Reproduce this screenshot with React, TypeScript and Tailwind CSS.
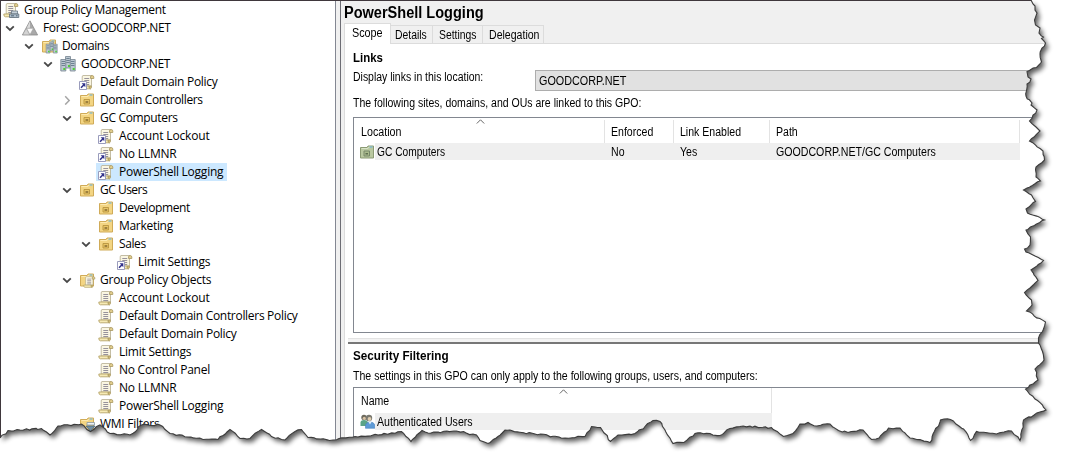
import type { ReactNode } from 'react';

type Kind = 'root' | 'forest' | 'domains' | 'domain' | 'link' | 'ou' | 'gpos' | 'gpo' | 'wmi';

interface TreeItem {
  label: string;
  depth: number;
  kind: Kind;
  state?: 'open' | 'closed';
  selected?: boolean;
  spacing: string;
}

const TREE: TreeItem[] = [
  { label: 'Group Policy Management', depth: 0, kind: 'root', spacing: 'tracking-[-0.28px]' },
  { label: 'Forest: GOODCORP.NET', depth: 1, kind: 'forest', state: 'open', spacing: 'tracking-[-0.34px]' },
  { label: 'Domains', depth: 2, kind: 'domains', state: 'open', spacing: 'tracking-[-0.38px]' },
  { label: 'GOODCORP.NET', depth: 3, kind: 'domain', state: 'open', spacing: 'tracking-[-0.33px]' },
  { label: 'Default Domain Policy', depth: 4, kind: 'link', spacing: 'tracking-[-0.28px]' },
  { label: 'Domain Controllers', depth: 4, kind: 'ou', state: 'closed', spacing: 'tracking-[-0.36px]' },
  { label: 'GC Computers', depth: 4, kind: 'ou', state: 'open', spacing: 'tracking-[-0.33px]' },
  { label: 'Account Lockout', depth: 5, kind: 'link', spacing: 'tracking-[-0.14px]' },
  { label: 'No LLMNR', depth: 5, kind: 'link', spacing: 'tracking-[-0.2px]' },
  { label: 'PowerShell Logging', depth: 5, kind: 'link', selected: true, spacing: 'tracking-[-0.24px]' },
  { label: 'GC Users', depth: 4, kind: 'ou', state: 'open', spacing: 'tracking-[-0.5px]' },
  { label: 'Development', depth: 5, kind: 'ou', spacing: 'tracking-[-0.4px]' },
  { label: 'Marketing', depth: 5, kind: 'ou', spacing: 'tracking-[-0.3px]' },
  { label: 'Sales', depth: 5, kind: 'ou', state: 'open', spacing: 'tracking-[-0.4px]' },
  { label: 'Limit Settings', depth: 6, kind: 'link', spacing: 'tracking-[-0.22px]' },
  { label: 'Group Policy Objects', depth: 4, kind: 'gpos', state: 'open', spacing: 'tracking-[-0.25px]' },
  { label: 'Account Lockout', depth: 5, kind: 'gpo', spacing: 'tracking-[-0.14px]' },
  { label: 'Default Domain Controllers Policy', depth: 5, kind: 'gpo', spacing: 'tracking-[-0.3px]' },
  { label: 'Default Domain Policy', depth: 5, kind: 'gpo', spacing: 'tracking-[-0.28px]' },
  { label: 'Limit Settings', depth: 5, kind: 'gpo', spacing: 'tracking-[-0.22px]' },
  { label: 'No Control Panel', depth: 5, kind: 'gpo', spacing: 'tracking-[-0.26px]' },
  { label: 'No LLMNR', depth: 5, kind: 'gpo', spacing: 'tracking-[-0.2px]' },
  { label: 'PowerShell Logging', depth: 5, kind: 'gpo', spacing: 'tracking-[-0.24px]' },
  { label: 'WMI Filters', depth: 4, kind: 'wmi', spacing: 'tracking-[-0.25px]' },
];

function Scroll() {
  return (
    <g>
      <path d="M4 1.500h8.500V12H3.200V3Q3.200 1.500 4 1.500z" fill="#faf6e2" stroke="#b5ad90" strokeWidth=".8" />
      <path d="M11.500 4.500V3q0-1.500 1.600-1.500T14.800 3v1.500z" fill="#e3cf8e" stroke="#a8975f" strokeWidth=".8" />
      <path d="M.8 12h9.400q-.4 2.800 1.300 2.800H2.300Q.8 14.800.8 12z" fill="#f6eab4" stroke="#b5a469" strokeWidth=".9" />
      <path d="M10.200 12q-.3 2.800 1.100 2.800t1.200-2.800z" fill="#d3bc74" stroke="#a8975f" strokeWidth=".7" />
      <path d="M5.300 4.500h4.900M5.300 6.500h4.900M5.300 8.500h4.900M5.300 10.500h4.900" stroke="#8b8794" strokeWidth=".9" />
    </g>
  );
}

function FolderShape({ green = false }: { green?: boolean }) {
  return (
    <g>
      <path d="M1.500 3.500H8l1-1.500h5.500v12h-13z" fill={green ? '#b9c8a0' : '#f3d583'} stroke={green ? '#8b9a74' : '#d0ab58'} />
      <path d="M2.500 4.500H9l1-1.500h3.500" fill="none" stroke={green ? '#d8e3c6' : '#fdeab0'} />
      <path d="M10.500 3h3" stroke="#5aa7d0" />
    </g>
  );
}

function Towers({ small = false }: { small?: boolean }) {
  return (
    <g transform={small ? 'translate(4.500 3.500) scale(.77)' : undefined}>
      {[[5.500, 0.500, 11.500], [0.800, 3.500, 11.500], [10.200, 3.500, 11.500]].map(([x, y, h], i) => (
        <g key={i}>
          <path d={`M${x} ${y}h5v${h}h-5z`} fill="#bcc8d2" stroke="#75838f" strokeWidth=".8" />
          <path d={`M${x + 0.800} ${y + 2}h3.400M${x + 0.800} ${y + 4}h3.400M${x + 0.800} ${y + 6}h3.400`} stroke="#66798a" strokeWidth=".9" />
          <path d={`M${x + 2.500} ${y + 8.500}h2v2h-2z`} fill="#4cd332" />
        </g>
      ))}
    </g>
  );
}

function NodeIcon({ kind }: { kind: Kind }) {
  return (
    <svg className="h-4 w-4 shrink-0 overflow-visible" viewBox="0 0 16 16">
      {kind === 'root' && (
        <>
          <Scroll />
          <path d="M8.500 9h6v3h-6z" fill="#c6d0d8" stroke="#6b7a87" strokeWidth=".8" />
          <path d="M6.500 12h9.300v3.500H6.500z" fill="#aebdc9" stroke="#5d6c79" strokeWidth=".8" />
          <path d="M8 13.800h3M13 13.800h1.500" stroke="#526677" />
        </>
      )}
      {kind === 'forest' && (
        <>
          <path d="M8 .8 15.600 15H.4z" fill="#a9a9a9" stroke="#8c8c8c" strokeWidth=".8" />
          <path d="M8 1.200v6.600l-3.400.4z" fill="#dadada" />
          <path d="M4.500 8.300h7L8 14.700z" fill="#fafafa" stroke="#9a9a9a" strokeWidth=".6" />
          <path d="m4.200 9-3 5.500h6z" fill="#d3d3d3" />
        </>
      )}
      {kind === 'domains' && (
        <>
          <FolderShape />
          <Towers small />
        </>
      )}
      {kind === 'domain' && <Towers />}
      {(kind === 'gpo' || kind === 'link') && <Scroll />}
      {kind === 'link' && (
        <>
          <path d="M.5 7.500h7v8h-7z" fill="#fff" stroke="#9a9cbc" />
          <path d="m2 13.800 3-3" stroke="#31318a" strokeWidth="1.600" />
          <path d="M2.600 9.300h3.700v3.900z" fill="#31318a" />
        </>
      )}
      {kind === 'ou' && (
        <>
          <FolderShape />
          <path d="M5 7.500h5.500V12H5z" fill="#e9c667" stroke="#b8943f" strokeWidth=".9" />
          <path d="M6.500 9.200h2.800v1.600H6.500z" fill="#8a6f35" />
        </>
      )}
      {kind === 'gpos' && (
        <>
          <FolderShape />
          <g transform="translate(4 3.500) scale(.8)">
            <Scroll />
          </g>
        </>
      )}
      {kind === 'wmi' && (
        <>
          <FolderShape />
          <path d="M8 6.500h7.500V9H8z" fill="#edf1f4" stroke="#8797a2" strokeWidth=".8" />
          <path d="M7 10h9l-3.500 4v3h-2v-3z" fill="#718fa4" stroke="#476275" strokeWidth=".7" />
        </>
      )}
    </svg>
  );
}

const INDENT = ['w-0', 'w-0', 'w-[19px]', 'w-[38px]', 'w-[57px]', 'w-[76px]', 'w-[95px]'];

function TreeRow({ item }: { item: TreeItem }) {
  return (
    <div className="flex h-[18px] shrink-0 items-center">
      <div className={`shrink-0 ${INDENT[item.depth]}`} />
      <div className={`flex shrink-0 justify-center ${item.depth === 0 ? 'w-0' : 'w-[19px]'}`}>
        {item.state && (
          <svg className="mr-px h-[10px] w-[10px]" viewBox="0 0 10 10" fill="none">
            {item.state === 'open' ? (
              <path d="m1.200 3.300 3.800 3.700 3.800-3.700" stroke="#484848" strokeWidth="1.800" />
            ) : (
              <path d="m3.200 1.200 4 4.200-4 4.200" stroke="#a6a6a6" strokeWidth="1.500" />
            )}
          </svg>
        )}
      </div>
      <div className={`flex h-[18px] items-center gap-[5px] pr-[4px] pl-[2px] ${item.selected ? 'bg-[#cce8ff]' : ''}`}>
        <NodeIcon kind={item.kind} />
        <span className={`text-[12px] leading-[18px] whitespace-nowrap ${item.spacing}`}>{item.label}</span>
      </div>
    </div>
  );
}

function SortMark() {
  return (
    <svg className="h-[5px] w-[9px]" viewBox="0 0 9 5">
      <path d="m.8 4.500 3.700-3.700 3.700 3.700" fill="none" stroke="#666" />
    </svg>
  );
}

/** Text set in condensed proportions, as the dialog font draws it. */
function Condensed({ fit = 'scale-x-[.88]', children }: { fit?: string; children: ReactNode }) {
  return <span className={`inline-block origin-left whitespace-nowrap ${fit}`}>{children}</span>;
}

function Cell({ className, children }: { className: string; children: ReactNode }) {
  return <div className={`flex shrink-0 items-center whitespace-nowrap ${className}`}>{children}</div>;
}

const TEAR: [number, number][] = [
  [1031, 0], [1033, 4], [1035, 6], [1035, 10], [1037, 13], [1034.500, 20], [1035.500, 25], [1040, 28], [1039, 33], [1043.500, 37], [1041.500, 38.500],
  [1045.500, 43], [1042, 48], [1040, 54], [1041.500, 62], [1036.500, 67.500], [1027, 71.500], [1028, 77], [1031, 79], [1027, 84], [1026, 96],
  [1032, 103], [1031, 105], [1037, 110], [1033, 115], [1029.500, 121], [1036, 127], [1040, 131], [1034, 137], [1029.500, 141], [1043, 151],
  [1044.500, 160], [1036, 167], [1036, 177], [1040.500, 181], [1023.500, 190], [1031.500, 195], [1035.500, 201.500], [1026, 209], [1027.500, 213],
  [1044.500, 220], [1026, 230], [1030.500, 237], [1030, 245], [1024.500, 249], [1026, 252], [1035, 256], [1043.500, 260.500], [1031, 270],
  [1038, 280.500], [1030, 288], [1024.500, 292.500], [1031.500, 300], [1032, 305], [1026.500, 311], [1045.500, 322], [1042.500, 331.500],
  [1038.500, 338], [1038.500, 343], [1042.500, 351.500], [1044, 360], [1035, 369], [1038, 380], [1025.500, 389], [1035, 399], [1046, 410],
  [1023.500, 420], [1020, 440.500], [1018, 437], [1011.500, 431], [1004, 432], [996.500, 434], [976.500, 431.500], [970.500, 440.500], [963.500, 429],
  [956, 424], [950.500, 419.500], [940.500, 420], [930, 442.500], [910, 438], [900, 428], [888.500, 428], [879, 438], [871.500, 439.500], [863, 430],
  [848, 432.500], [838.500, 430.500], [830, 424], [817, 426], [808, 422.500], [800, 424], [793, 433.500], [783.500, 436.500], [771.500, 427.500],
  [740, 426.500], [730, 428.500], [720, 435.500], [710, 433.500], [695, 433.500], [684, 442.500], [673, 443.500], [665, 430], [660, 421.500],
  [653, 420.500], [645, 426.500], [635, 433.500], [618, 435], [610.500, 441.500], [600.500, 427.500], [591.500, 426.500], [585, 436.500], [565, 438],
  [535, 434], [505, 430], [498, 436.500], [488, 443.500], [480, 440.500], [476.500, 435], [456.500, 431], [428, 433], [422, 430.500], [411, 441.500],
  [401.500, 431.500], [378, 435], [355, 436.500], [333, 440], [308, 437.500], [301.500, 429.500], [295, 431.500], [285, 440], [271.500, 436.500],
  [261.500, 429.500], [250, 438.500], [240, 438.500], [230, 429.500], [218, 439.500], [203, 439.500], [170, 433.500], [160, 425], [141.500, 425],
  [130, 435], [110, 433.500], [100, 425], [90.500, 431.500], [81.500, 424], [58, 426], [50, 435], [41.500, 428.500], [20, 430], [8, 430.500], [0, 438],
];

function roughen(points: [number, number][]): string {
  let seed = 7;
  const noise = () => {
    seed = (seed * 1103515245 + 12345) % 2147483648;
    return seed / 2147483648 - 0.5;
  };
  const out: string[] = [];
  points.forEach(([x, y], i) => {
    out.push(`${x} ${y}`);
    const next = points[i + 1];
    if (!next) return;
    const steps = Math.floor(Math.hypot(next[0] - x, next[1] - y) / 3);
    for (let s = 1; s < steps; s++) {
      const px = x + ((next[0] - x) * s) / steps + noise() * 1.800;
      const py = y + ((next[1] - y) * s) / steps + noise() * 1.800;
      out.push(`${px.toFixed(1)} ${py.toFixed(1)}`);
    }
  });
  return out.join('L');
}

const EDGE = roughen(TEAR);

function TornEdge() {
  const outside = `M${EDGE}V466H1070V0z`;
  return (
    <svg className="pointer-events-none absolute inset-0 h-[466px] w-[1070px]" viewBox="0 0 1070 466">
      <defs>
        <clipPath id="outside">
          <path d={outside} />
        </clipPath>
        <filter id="soft" x="-5%" y="-5%" width="110%" height="110%">
          <feGaussianBlur stdDeviation="2.4" />
        </filter>
      </defs>
      <path d={outside} fill="#fff" />
      <g clipPath="url(#outside)">
        <path d={`M${EDGE}V8H1025z`} transform="translate(3 3.500)" fill="#000" opacity=".64" filter="url(#soft)" />
      </g>
      <path d={`M${EDGE}`} fill="none" stroke="#3c3c3c" strokeWidth="1.100" />
    </svg>
  );
}

const TAB = 'flex h-[18px] items-center justify-center border-t border-r border-[#dcdcdc]';

export default function App() {
  return (
    <div className="relative h-[466px] w-[1070px] overflow-hidden bg-white text-black">
      <div className="flex h-[466px] border-t border-l border-[#3f373c]">
        <aside className="flex w-[334px] shrink-0 flex-col font-['Open_Sans','Noto_Sans',sans-serif]">
          {TREE.map((item, i) => (
            <TreeRow key={i} item={item} />
          ))}
        </aside>
        <div className="w-[6px] shrink-0 border-x border-l-[#838792] border-r-[#6d6d74] bg-[#f0f0f0]" />

        <main className="flex min-w-0 grow flex-col bg-[#f0f0f0] pl-[3px] font-['Liberation_Sans',Arial,sans-serif] text-[12px]">
          <h1 className="h-[22px] text-[16px] leading-[23px] font-bold">
            <Condensed fit="scale-x-[.908]">PowerShell Logging</Condensed>
          </h1>
          <div className="flex h-5 items-end">
            <div className="z-10 -mb-px flex h-[21px] w-[47px] shrink-0 items-center border border-b-0 border-[#dcdcdc] bg-white pb-[2px] pl-[7px]">
              <Condensed fit="scale-x-[.9]">Scope</Condensed>
            </div>
            <div className={TAB}>
              <div className="w-[41px] pl-[4px]">
                <Condensed fit="scale-x-[.865]">Details</Condensed>
              </div>
            </div>
            <div className={TAB}>
              <div className="w-[49px] pl-[6px]">
                <Condensed fit="scale-x-[.865]">Settings</Condensed>
              </div>
            </div>
            <div className={TAB}>
              <div className="w-[60px] pl-[6px]">
                <Condensed>Delegation</Condensed>
              </div>
            </div>
          </div>

          <div className="flex grow flex-col border-t border-l border-[#dcdcdc] bg-white">
            <section className="flex h-[294px] shrink-0 flex-col pl-[8px]">
              <h2 className="mt-[5px] h-[18px] text-[13px] leading-[18px] font-bold">
                <Condensed>Links</Condensed>
              </h2>
              <div className="mt-[3px] flex h-[21px]">
                <div className="w-[182px] shrink-0 leading-[15px]">
                  <Condensed fit="scale-x-[.872]">Display links in this location:</Condensed>
                </div>
                <div className="flex h-[21px] grow items-center border border-[#adadad] bg-[#e1e1e1] pl-[3px]">
                  <Condensed fit="scale-x-[.9]">GOODCORP.NET</Condensed>
                </div>
              </div>
              <p className="mt-[4px] h-[17px] leading-[17px]">
                <Condensed fit="scale-x-[.877]">The following sites, domains, and OUs are linked to this GPO:</Condensed>
              </p>
              <div className="mt-[5px] flex h-[216px] flex-col border border-r-0 border-[#828790]">
                <div className="flex h-[25px] shrink-0 items-stretch pt-[2px]">
                  <Cell className="relative w-[251px] border-r border-[#e3e3e3] pl-[7px]">
                    <Condensed fit="scale-x-[.89]">Location</Condensed>
                    <span className="absolute -top-px left-[122px] flex">
                      <SortMark />
                    </span>
                  </Cell>
                  <Cell className="w-[69px] border-r border-[#e3e3e3] pl-[6px]">
                    <Condensed>Enforced</Condensed>
                  </Cell>
                  <Cell className="w-[96px] border-r border-[#e3e3e3] pl-[6px]">
                    <Condensed>Link Enabled</Condensed>
                  </Cell>
                  <Cell className="w-[250px] border-r border-[#e3e3e3] pl-[6px]">
                    <Condensed>Path</Condensed>
                  </Cell>
                </div>
                <div className="flex h-[17px] w-[666px] shrink-0">
                  <div className="flex w-[21px] shrink-0 items-center pl-[5px]">
                    <svg className="h-4 w-4 shrink-0" viewBox="0 0 16 16">
                      <FolderShape green />
                      <path d="M5 7h5.500v5H5z" fill="#a9ba8c" stroke="#78886a" />
                      <path d="M6.500 9h2.500v1.500H6.500z" fill="#5d6e50" />
                    </svg>
                  </div>
                  <div className="flex grow bg-[#efefef]">
                    <Cell className="w-[230px] pl-[2px]">
                      <Condensed fit="scale-x-[.85]">GC Computers</Condensed>
                    </Cell>
                    <Cell className="w-[69px] pl-[6px]">
                      <Condensed>No</Condensed>
                    </Cell>
                    <Cell className="w-[96px] pl-[6px]">
                      <Condensed>Yes</Condensed>
                    </Cell>
                    <Cell className="w-[250px] pl-[6px]">
                      <Condensed fit="scale-x-[.885]">GOODCORP.NET/GC Computers</Condensed>
                    </Cell>
                  </div>
                </div>
              </div>
            </section>

            <div className="ml-[3px] h-[6px] shrink-0 border-t border-b-2 border-t-[#e3e3e3] border-b-[#777] bg-[#f3f3f3]" />

            <section className="flex grow flex-col pl-[8px]">
              <h2 className="mt-[3px] h-[18px] text-[13px] leading-[18px] font-bold">
                <Condensed fit="scale-x-[.9]">Security Filtering</Condensed>
              </h2>
              <p className="mt-[3px] h-[16px] leading-[16px]">
                <Condensed fit="scale-x-[.882]">
                  The settings in this GPO can only apply to the following groups, users, and computers:
                </Condensed>
              </p>
              <div className="mt-[3px] flex grow flex-col border-t border-l border-[#828790]">
                <Cell className="relative h-[25px] w-[418px] border-r border-[#e3e3e3] pl-[7px]">
                  <Condensed>Name</Condensed>
                  <span className="absolute top-px left-[205px] flex">
                    <SortMark />
                  </span>
                </Cell>
                <div className="flex h-[17px] w-[418px] shrink-0">
                  <div className="w-[21px] shrink-0 pl-[6px]">
                    <svg className="mt-px h-[15px] w-[16px]" viewBox="0 0 16 15">
                      <circle cx="4" cy="3.500" r="2.700" fill="#6d6a5d" />
                      <path d="M.5 12V8.500Q.5 6 4 6t4 2.500V12z" fill="#5ca487" />
                      <circle cx="4.300" cy="4.300" r="1.600" fill="#d9c3a4" />
                      <circle cx="9" cy="4" r="3.200" fill="#7a7970" />
                      <circle cx="9.500" cy="5" r="1.900" fill="#dfcdb0" />
                      <path d="M5.500 14.300V11q1-3 4.700-3t4.600 3v3.300z" fill="#5d9ad6" stroke="#4a83bd" strokeWidth=".6" />
                      <path d="m8.500 8 1.500 2.500L11.500 8z" fill="#e2f0fb" />
                    </svg>
                  </div>
                  <div className="flex grow items-center bg-[#efefef] pl-[2px]">
                    <Condensed fit="scale-x-[.885]">Authenticated Users</Condensed>
                  </div>
                </div>
              </div>
            </section>
          </div>
        </main>
      </div>
      <TornEdge />
    </div>
  );
}
